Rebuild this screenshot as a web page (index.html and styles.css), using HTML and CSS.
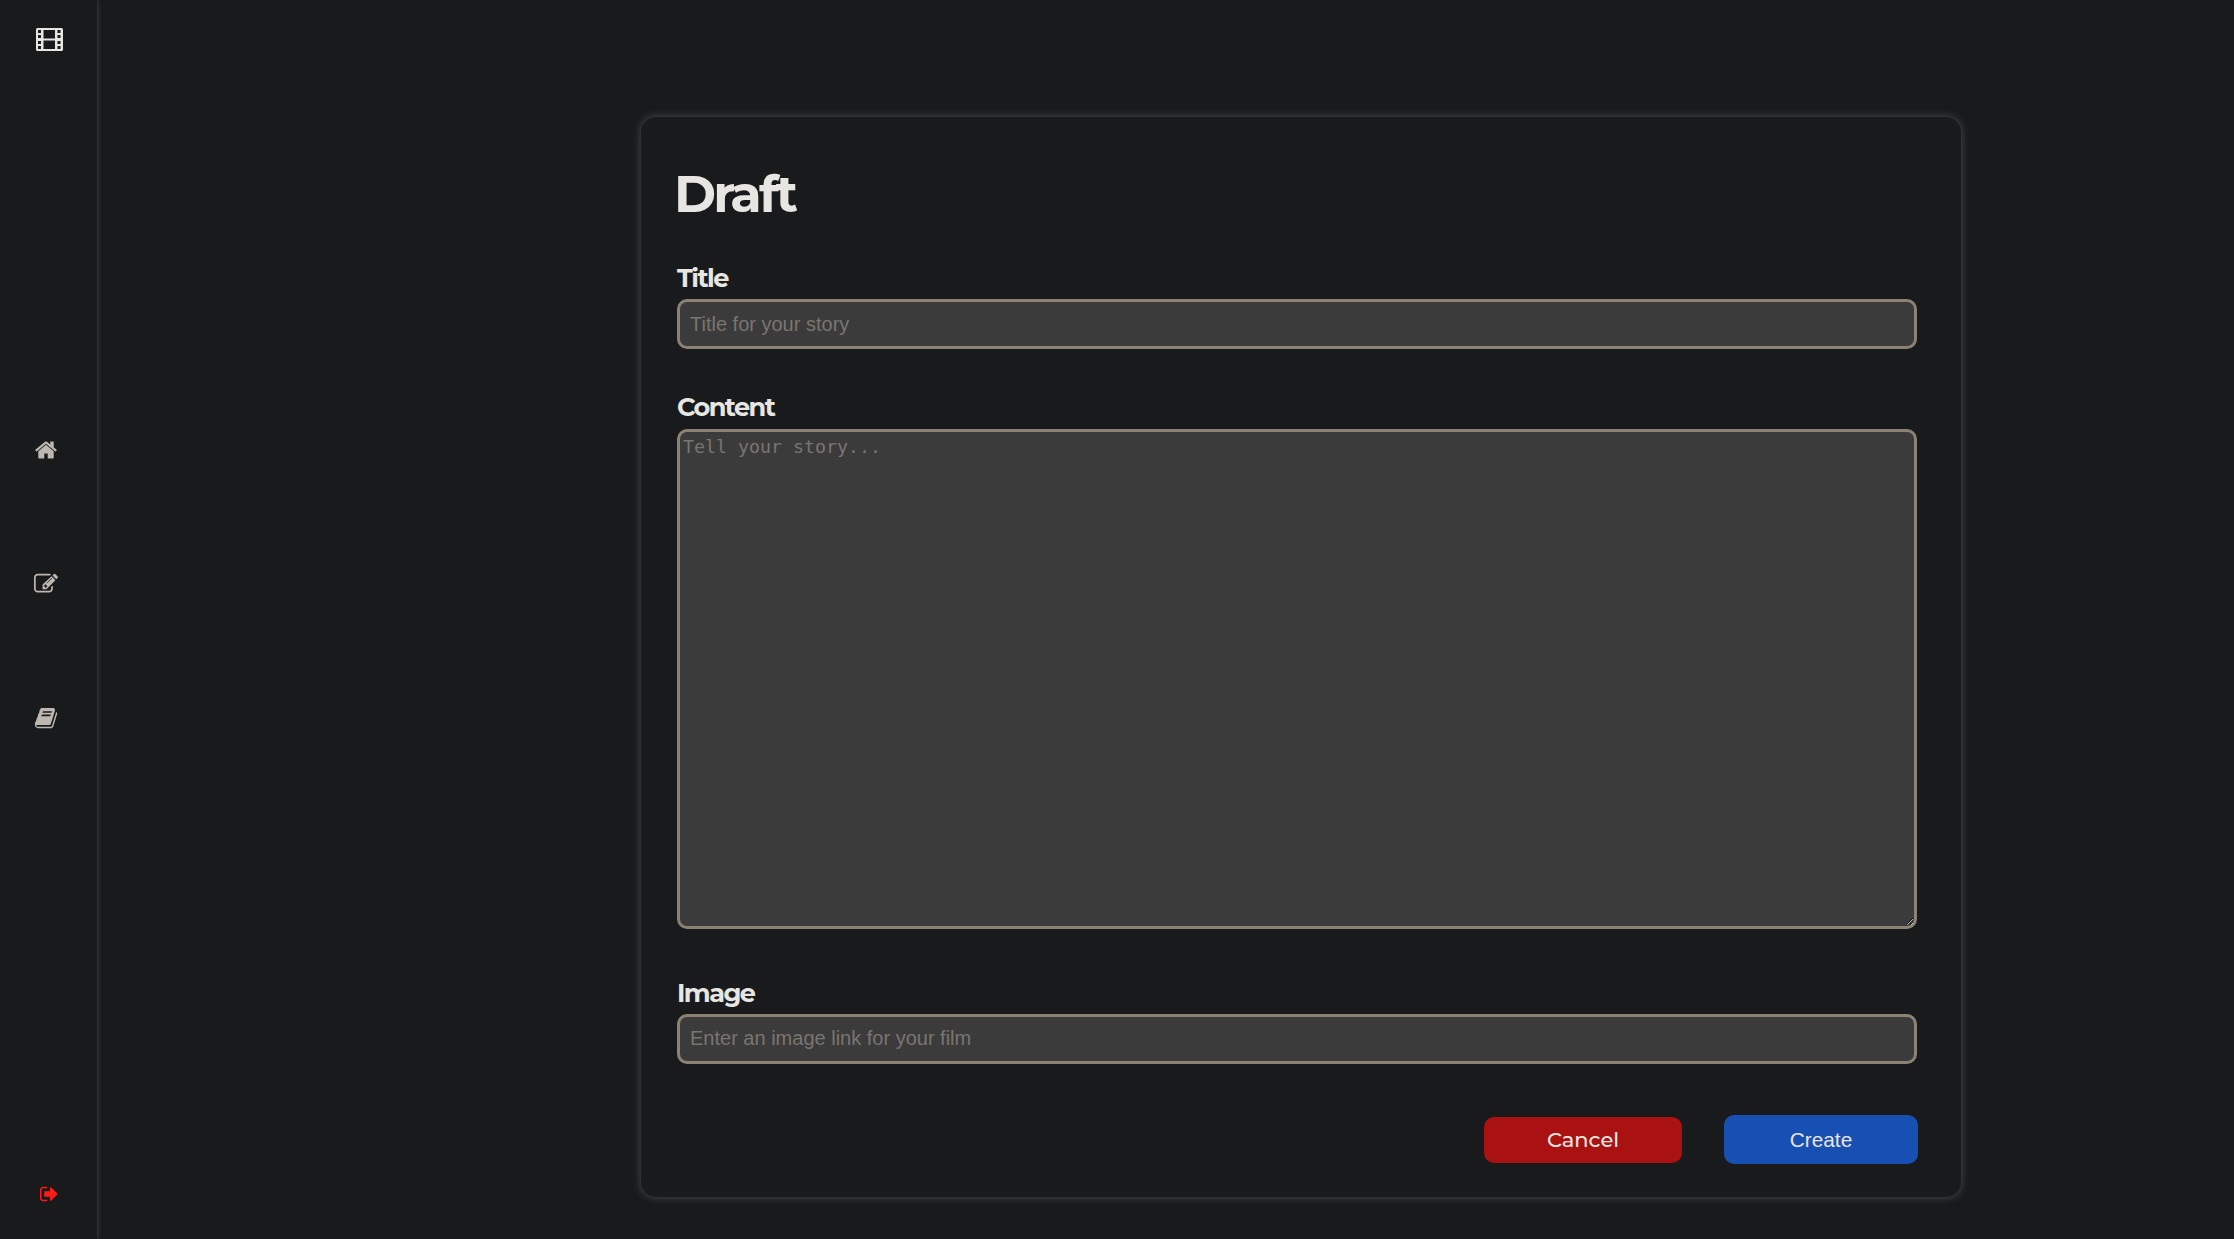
FILE: index.html
```html
<!DOCTYPE html>
<html lang="en">
<head>
<meta charset="utf-8">
<title>Draft</title>
<link rel="stylesheet" href="styles.css">
</head>
<body>
<div class="app">
  <aside class="sidebar">
    <a class="logo" aria-label="Films">
      <svg width="27" height="23" viewBox="0 0 27 23"><path fill-rule="evenodd" d="M1.5 0h24Q27 0 27 1.500v20q0 1.500-1.500 1.500h-24Q0 23 0 21.500v-20Q0 0 1.500 0zM2 2v3h3V2zm0 5v3h3V7zm0 6v3h3v-3zm0 5v3h3v-3zM21.500 2v3h3V2zm0 5v3h3V7zm0 6v3h3v-3zm0 5v3h3v-3zM7.500 2v8.500H19V2zm0 10.500V21H19v-8.500z"/></svg>
    </a>
    <nav class="nav">
      <a aria-label="Home"><svg width="24" height="24" viewBox="0 0 1792 1792"><path d="M1472 992v480q0 26-19 45t-45 19H1024v-384H768v384H384q-26 0-45-19t-19-45V992q0-1 .5-3t.5-3l575-474 575 474q1 2 1 6zm223-69l-62 74q-8 9-21 11h-3q-13 0-21-7L896 424l-692 577q-12 8-24 7-13-2-21-11l-62-74q-8-10-7-23.500t11-21.500l719-599q32-26 76-26t76 26l244 204V288q0-14 9-23t23-9h192q14 0 23 9t9 23v408l219 182q10 8 11 21.500t-7 23.500z"/></svg></a>
      <a aria-label="Write"><svg width="24" height="24" viewBox="0 0 1792 1792"><path d="M888 1184l116-116-152-152-116 116v56h96v96h56zm440-720q-16-16-33 1L945 815q-17 17-1 33t33-1l350-350q17-17 1-33zm80 594v190q0 119-84.500 203.500T1120 1536H288q-119 0-203.500-84.500T0 1248V416q0-119 84.500-203.500T288 128h832q63 0 117 25 15 7 18 23 3 17-9 29l-49 49q-14 14-32 8-23-6-45-6H288q-66 0-113 47t-47 113v832q0 66 47 113t113 47h832q66 0 113-47t47-113v-126q0-13 9-22l64-64q15-15 35-7t20 29zm-96-738l288 288-672 672H640V928zm444 132l-92 92-288-288 92-92q28-28 68-28t68 28l152 152q28 28 28 68t-28 68z"/></svg></a>
      <a aria-label="Stories"><svg width="24" height="24" viewBox="-64 0 1792 1792"><path d="M1639 478q40 57 18 129l-275 906q-19 64-76.500 107.500T1183 1664H260q-77 0-148.500-53.500T12 1479q-24-67-2-127 0-4 3-27t4-37q1-8-3-21.500t-3-19.500q2-11 8-21t16.500-23.500T52 1179q23-38 45-91.500t30-91.500q3-10 .5-30t-.5-28q3-11 17-28t17-23q21-36 42-92t25-90q1-9-2.500-32t.5-28q4-13 22-30.500t22-22.500q19-26 42.500-84.500T340 411q1-8-3-25.500t-2-26.500q2-8 9-18t18-23 17-21q8-12 16.500-30.500t15-35 16-36 19.500-32 26.500-23.500 36-11.500T556 153l-1 3q38-9 51-9h761q74 0 114 56t18 130l-274 906q-36 119-71.500 153.500T1025 1427H156q-27 0-38 15-11 16-1 43 24 70 144 70h923q29 0 56-15.500t35-41.500l300-987q7-22 5-57 38 15 59 43zm-1064 2q-4 13 2 22.500t20 9.500h608q13 0 25.500-9.500T1247 480l21-64q4-13-2-22.500t-20-9.500H638q-13 0-25.500 9.500T596 416zm-83 256q-4 13 2 22.500t20 9.500h608q13 0 25.500-9.500T1164 736l21-64q4-13-2-22.500t-20-9.500H555q-13 0-25.500 9.500T513 672z"/></svg></a>
    </nav>
    <a class="logout" aria-label="Sign out"><svg width="20" height="20" viewBox="0 0 1792 1792"><path d="M640 1440q0 4 1 20t.5 26.500-3 23.500-10 19.500-20.500 6.500H288q-119 0-203.500-84.500T0 1248V544q0-119 84.500-203.500T288 256h320q13 0 22.500 9.500T640 288q0 4 1 20t.5 26.500-3 23.500-10 19.500T608 384H288q-66 0-113 47t-47 113v704q0 66 47 113t113 47h312l11.500 1 11.500 3 8 5.500 7 9 2 13.500zm928-544q0 26-19 45l-544 544q-19 19-45 19t-45-19-19-45v-288H448q-26 0-45-19t-19-45V704q0-26 19-45t45-19h448V352q0-26 19-45t45-19 45 19l544 544q19 19 19 45z"/></svg></a>
  </aside>
  <main class="main">
    <form class="card">
      <h1>Draft</h1>
      <label class="label label-title" for="title">Title</label>
      <input class="field" id="title" type="text" placeholder="Title for your story">
      <label class="label label-content" for="content">Content</label>
      <textarea class="field story" id="content" placeholder="Tell your story..."></textarea>
      <label class="label label-image" for="image">Image</label>
      <input class="field link" id="image" type="text" placeholder="Enter an image link for your film">
      <div class="actions">
        <button class="btn cancel" type="button">Cancel</button>
        <button class="btn create" type="button">Create</button>
      </div>
    </form>
  </main>
</div>
</body>
</html>
```

FILE: styles.css
```css
* { box-sizing: border-box; }

body {
  margin: 0;
  background: #181a1b;
  color: #e8e6e3;
  font-family: Montserrat, Inter, sans-serif;
}

.app {
  display: flex;
  height: 1239px;
  overflow: hidden;
}

.sidebar {
  display: flex;
  flex-direction: column;
  flex: none;
  width: 97px;
  padding: 28px 0 35px;
  background: #181a1b;
  box-shadow: 0 0 5px #4a4e50;
}

.sidebar svg { display: block; fill: currentColor; }
.logo { height: 23px; padding-left: 36px; }

.nav {
  display: flex;
  flex-direction: column;
  gap: 110px;
  padding: 387px 0 0 34px;
  color: #bdb7af;
}

.logout {
  margin-top: auto;
  padding-left: 40px;
  color: #ff1a1a;
}

.main {
  flex: 1;
  padding: 117px 0 0 544px;
}

.card {
  display: flex;
  flex-direction: column;
  width: 1320px;
  height: 1080px;
  padding: 46px 44px 0 36px;
  border-radius: 15px;
  box-shadow: 0 0 8px #4a5052;
}

h1 {
  height: 60px;
  margin: 0 0 0 -3px;
  font-size: 51px;
  font-weight: 700;
  line-height: 62px;
  letter-spacing: -2.900px;
}

.label {
  height: 32px;
  font-size: 25.600px;
  font-weight: 700;
  line-height: 32px;
  letter-spacing: -1.550px;
}

.label-title { margin: 39px 0 5px; }
.label-content { margin: 42px 0 6px; }
.label-image { margin: 48px 0 5px; }

.field {
  flex: none;
  width: 1240px;
  height: 50px;
  margin: 0;
  padding: 1px 10px 0;
  border: 3px solid #8c8273;
  border-radius: 10px;
  background: #3b3b3b;
  color: #e8e6e3;
  font: 20px "Liberation Sans", Arial, sans-serif;
}

.link { padding: 0 10px 1px; }

.field::placeholder { color: #79756f; opacity: 1; }

.story {
  height: 500px;
  padding: 3px;
  font: 18.270px/24px "DejaVu Sans Mono", monospace;
}

.actions {
  display: flex;
  justify-content: flex-end;
  align-items: center;
  gap: 42px;
  height: 49px;
  margin: 51px -1px 0 0;
}

.btn {
  padding: 0;
  border: 0;
  border-radius: 10px;
  color: #e8e6e3;
}

.cancel {
  width: 198px;
  height: 46px;
  background: #aa1111;
  font: 500 21px Montserrat, Inter, sans-serif;
}

.create {
  width: 194px;
  height: 49px;
  background: #184fb3;
  font: 20.800px "Liberation Sans", Arial, sans-serif;
}
```
